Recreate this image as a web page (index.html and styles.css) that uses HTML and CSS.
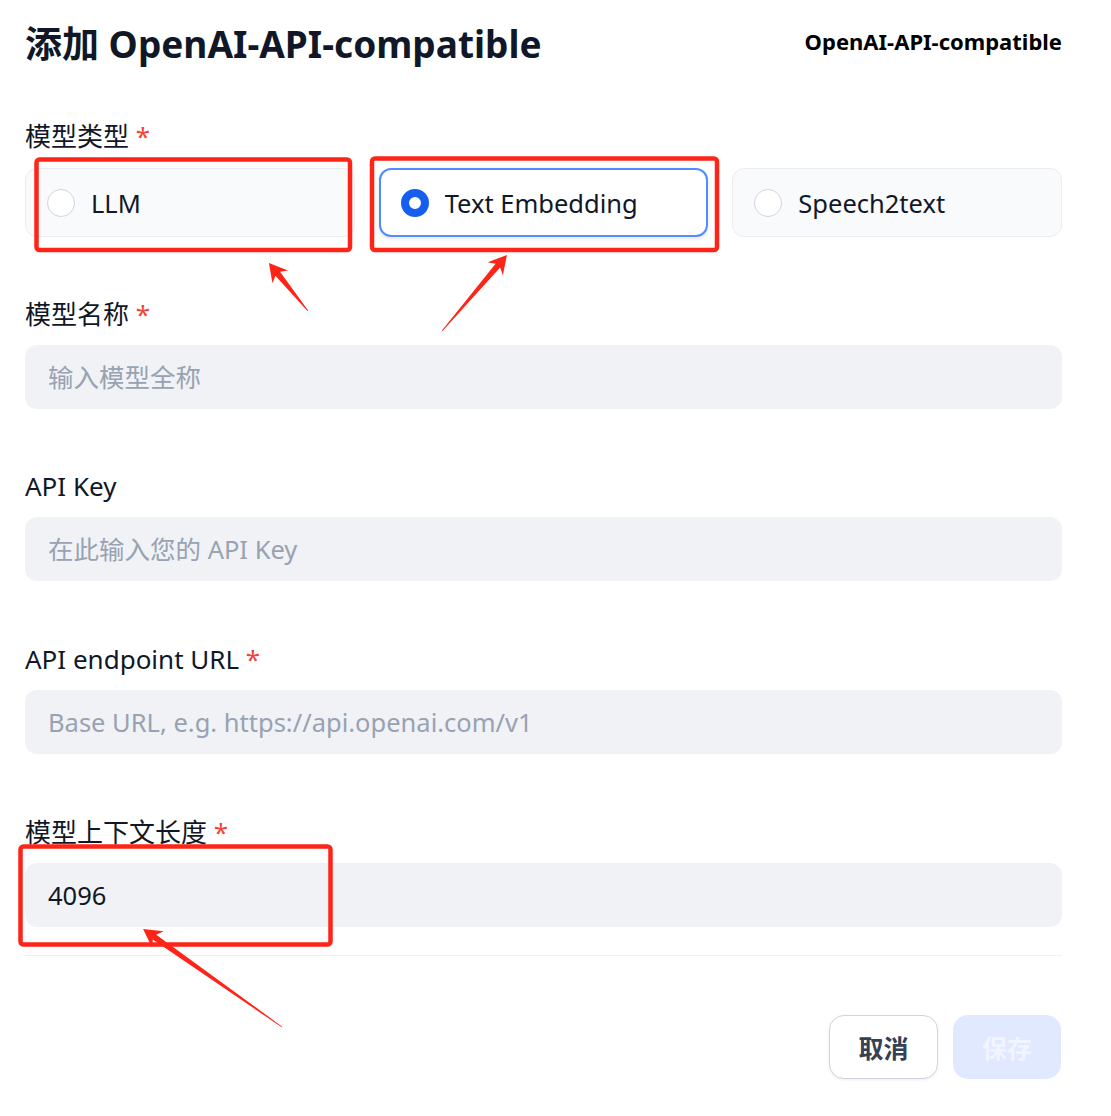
FILE: index.html
```html
<!DOCTYPE html>
<html lang="zh">
<head>
<meta charset="utf-8">
<title>添加 OpenAI-API-compatible</title>
<link rel="stylesheet" href="styles.css">
</head>
<body>
<div class="page">
  <div class="dialog">
    <header class="head">
      <h1 class="title">添加 OpenAI-API-compatible</h1>
      <div class="provider">OpenAI-API-compatible</div>
    </header>
    <div class="form">
      <div class="field field-type">
        <div class="label">模型类型 <span class="req">*</span></div>
        <div class="radios">
          <div class="radio-card"><span class="radio"></span><span class="radio-text">LLM</span></div>
          <div class="radio-card is-checked"><span class="radio"></span><span class="radio-text">Text Embedding</span></div>
          <div class="radio-card"><span class="radio"></span><span class="radio-text">Speech2text</span></div>
        </div>
      </div>
      <div class="field">
        <div class="label">模型名称 <span class="req">*</span></div>
        <input class="input" type="text" placeholder="输入模型全称">
      </div>
      <div class="field">
        <div class="label">API Key</div>
        <input class="input" type="text" placeholder="在此输入您的 API Key">
      </div>
      <div class="field field-wide">
        <div class="label">API endpoint URL <span class="req">*</span></div>
        <input class="input" type="text" placeholder="Base URL, e.g. https://api.openai.com/v1">
      </div>
      <div class="field field-wide">
        <div class="label">模型上下文长度 <span class="req">*</span></div>
        <input class="input" type="text" value="4096">
      </div>
    </div>
    <div class="divider"></div>
    <div class="actions">
      <button class="btn btn-cancel">取消</button>
      <button class="btn btn-save">保存</button>
    </div>
  </div>

  <svg class="annot" width="1111" height="1116" viewBox="0 0 1111 1116">
    <g class="marks">
      <rect x="36.5" y="159.5" width="313.5" height="90.5" rx="3"/>
      <rect x="372" y="158.5" width="345" height="91.5" rx="3"/>
      <rect x="20.5" y="846.5" width="310" height="98" rx="3"/>
    </g>
    <g class="arrows">
      <polygon transform="translate(308 311) rotate(-129.1)" points="0,-0.4 48,-3 44,-10 62,0 44,10 48,3 0,0.4"/>
      <polygon transform="translate(442 331) rotate(-49.5)" points="0,-0.4 86,-3 82,-10 100,0 82,10 86,3 0,0.4"/>
      <polygon transform="translate(282 1027) rotate(-144.8)" points="0,-0.4 156,-3 152,-10 170,0 152,10 156,3 0,0.4"/>
    </g>
  </svg>
</div>
</body>
</html>
```

FILE: styles.css
```css
* { box-sizing: border-box; }

html, body {
  margin: 0;
  padding: 0;
  background: #ffffff;
}

body {
  font-family: "Noto Sans", "Noto Sans CJK SC", sans-serif;
  color: #101828;
}

.page {
  position: relative;
  width: 1111px;
  height: 1116px;
  overflow: hidden;
}

.dialog {
  width: 1037px;
  margin-left: 25px;
}

.head {
  display: flex;
  justify-content: space-between;
  align-items: flex-start;
  height: 68px;
  padding-top: 20px;
}

.title {
  margin: 0;
  font-size: 37px;
  line-height: 48px;
  font-weight: 700;
  color: #101828;
  white-space: nowrap;
}

.provider {
  margin-top: 6px;
  font-size: 22px;
  line-height: 30px;
  font-weight: 700;
  color: #000000;
  white-space: nowrap;
}

.form {
  padding-top: 52px;
}

.field + .field {
  margin-top: 61px;
}

.field + .field-wide {
  margin-top: 62px;
}

.label {
  font-size: 26px;
  line-height: 32px;
  color: #101828;
  margin-bottom: 15px;
  white-space: nowrap;
}

.field-type .label {
  margin-bottom: 16px;
}

.req {
  color: #f04438;
}

.radios {
  display: grid;
  grid-template-columns: repeat(3, 1fr);
  gap: 24px;
}

.radio-card {
  display: flex;
  align-items: center;
  gap: 16px;
  height: 69px;
  padding: 0 21px;
  border: 1px solid #eaecf0;
  border-radius: 12px;
  background: #f9fafb;
}

.radio-card.is-checked {
  background: #ffffff;
  border: 2px solid #528bff;
  padding: 0 20px;
  box-shadow: 0 2px 4px rgba(16, 24, 40, 0.1);
}

.radio {
  flex: none;
  width: 28px;
  height: 28px;
  border-radius: 50%;
  border: 1px solid #d0d5dd;
  background: #ffffff;
}

.is-checked .radio {
  border: 8.5px solid #155eef;
}

.radio-text {
  font-size: 25.5px;
  line-height: 32px;
  color: #101828;
}

.input {
  display: block;
  width: 100%;
  height: 64px;
  padding: 0 23px;
  border: none;
  border-radius: 12px;
  background: #f0f2f5;
  font-family: "Noto Sans", "Noto Sans CJK SC", sans-serif;
  font-size: 25.5px;
  color: #101828;
  outline: none;
}

.input::placeholder {
  color: #98a2b3;
}

.divider {
  margin-top: 28px;
  height: 1px;
  background: #eef0f3;
}

.actions {
  display: flex;
  justify-content: flex-end;
  gap: 15px;
  margin-top: 59px;
}

.btn {
  height: 64px;
  border-radius: 15px;
  font-family: "Noto Sans", "Noto Sans CJK SC", sans-serif;
  font-size: 25px;
  font-weight: 700;
  padding: 0;
}

.btn-cancel {
  width: 109px;
  background: #ffffff;
  border: 1px solid #d0d5dd;
  color: #344054;
  box-shadow: 0 1px 3px rgba(16, 24, 40, 0.08);
}

.btn-save {
  width: 108px;
  margin-right: 1px;
  background: #e0e9ff;
  border: none;
  color: #f2f5ff;
}

.annot {
  position: absolute;
  left: 0;
  top: 0;
  pointer-events: none;
}

.marks rect {
  fill: none;
  stroke: #fe2418;
  stroke-width: 4.5;
}

.arrows polygon {
  fill: #fe2418;
}
```
